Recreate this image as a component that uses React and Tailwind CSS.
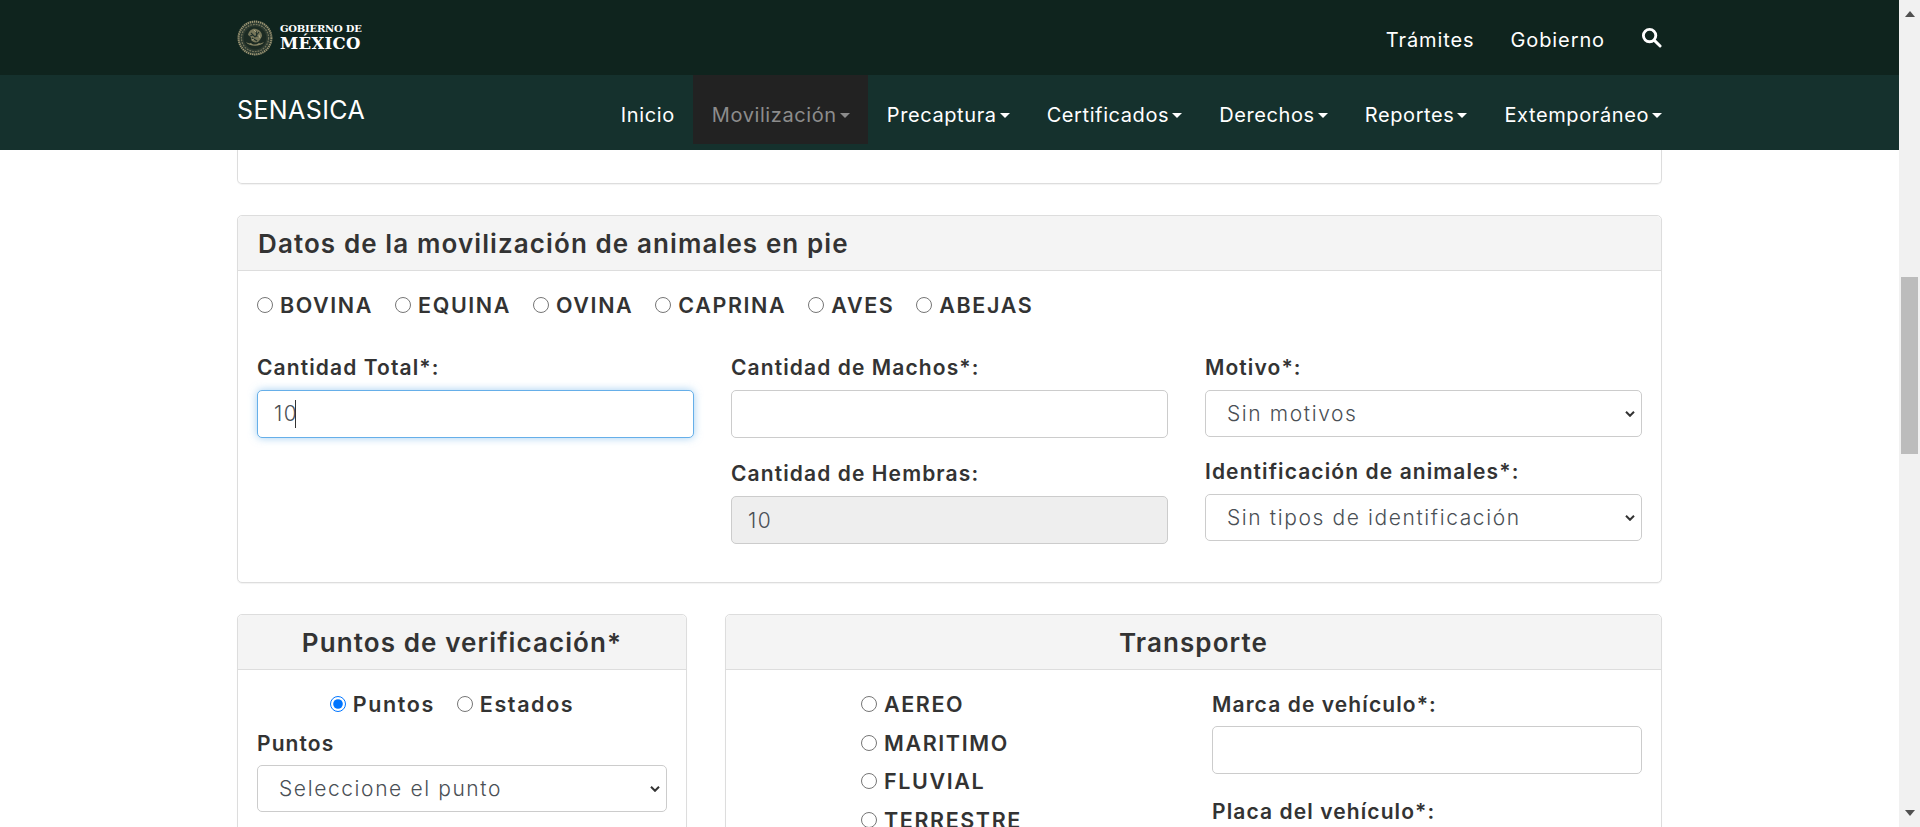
const font = "font-['Inter',sans-serif]"

function Caret() {
  return <span className="ml-[3px] inline-block border-x-[5px] border-t-[5px] border-x-transparent border-t-current align-middle" />
}

function Seal() {
  return (
    <svg viewBox="0 0 36 36" className="h-9 w-9" aria-hidden="true">
      <circle cx="18" cy="18" r="17.6" fill="#2c3a30" />
      <circle cx="18" cy="18" r="16.4" fill="none" stroke="#9c9674" strokeWidth="2" strokeDasharray="1.3 .8" />
      <circle cx="18" cy="18" r="13.6" fill="none" stroke="#77775d" strokeWidth="1.2" strokeDasharray="1.8 1" />
      <circle cx="18" cy="18" r="11.4" fill="#1c2b23" />
      <path d="M9 22c3 5 15 5 18 0-2 1-4 2-5 1-3 2-6 2-8 0-2 1-3 0-5-1z" fill="#8b8867" />
      <path d="M11 15c1-5 5-7 8-6 4 1 6 4 6 7-1 3-3 5-4 6-3 1-5 0-7-2 1-2-1-4-3-5z" fill="#77775a" />
      <path d="M14 13l4 4 4-5M15 18l5 3M19 11l1 6M13 16l3-1" stroke="#20302a" strokeWidth="1.1" fill="none" />
      <path d="M17 10l2 2M22 15l1 3M15 20l2-1" stroke="#b5af8a" strokeWidth=".8" fill="none" />
    </svg>
  )
}

function NavItem({ label, active, caret = true }) {
  return (
    <a className={`flex h-[69px] items-center px-[18.5px] pt-[11px] text-[20px] tracking-[0.6px] ${active ? "bg-[#222222] text-[#8c8c8c]" : "text-white"}`}>
      {label}
      {caret && <Caret />}
    </a>
  )
}

function Label({ children, className = "" }) {
  return <label className={`block text-[21px] leading-[30px] font-semibold tracking-[1.1px] text-[#333333] ${className}`}>{children}</label>
}

function Radio({ label, checked, className = "" }) {
  return (
    <label className={`flex items-center gap-[7px] text-[21.5px] leading-[30px] font-semibold tracking-[1.6px] text-[#333333] ${className}`}>
      <input type="radio" defaultChecked={checked} name={label} className="m-0 h-4 w-4" />
      {label}
    </label>
  )
}

const fieldClass = "block w-full rounded-[5px] border text-[21px] font-light tracking-[1.6px] text-[#4a4f55] outline-none"

function Select({ children }) {
  return (
    <div className="relative">
      <select className={`${fieldClass} h-[47px] appearance-none border-[#cccccc] bg-white pl-[21px] pr-[20px]`}>
        <option>{children}</option>
      </select>
      <svg viewBox="0 0 10 6" className="pointer-events-none absolute top-[21px] right-[7px] h-[6px] w-[10px]" fill="none" stroke="#333333" strokeWidth="2" aria-hidden="true">
        <path d="M1 .8l4 4 4-4" />
      </svg>
    </div>
  )
}

function Input({ value, disabled }) {
  return (
    <input
      defaultValue={value}
      disabled={disabled}
      className={`${fieldClass} h-[48px] border-[#cccccc] px-[16px] ${disabled ? "bg-[#eeeeee]" : "bg-white"}`}
    />
  )
}

function Card({ title, center, className = "", children }) {
  return (
    <section className={`rounded-[5px] border border-[#dddddd] bg-white shadow-[0_1px_1px_rgba(0,0,0,0.05)] ${className}`}>
      <h2 className={`flex h-[55px] items-center rounded-t-[5px] border-b border-[#dddddd] bg-[#f4f4f4] px-[20px] text-[26px] font-semibold tracking-[1.1px] text-[#333333] ${center ? "justify-center" : ""}`}>
        {title}
      </h2>
      {children}
    </section>
  )
}

export default function App() {
  return (
    <div className={`flex h-[827px] overflow-hidden bg-white ${font}`}>
      <div className="min-w-0 flex-1">
        <header className="h-[75px] bg-[#0f241e]">
          <div className="mx-auto flex h-full w-[1425px] items-center justify-between">
            <div className="flex items-center gap-[7px]">
              <Seal />
              <div className="font-['DejaVu_Serif',serif] font-bold text-white">
                <div className="text-[10px] leading-[12px] tracking-[-0.2px]">GOBIERNO DE</div>
                <div className="text-[16.5px] leading-[17px] tracking-[0.3px]">MÉXICO</div>
              </div>
            </div>
            <nav className="flex items-center gap-[36px] text-[20px] tracking-[0.9px] text-white">
              <a className="pt-[4px]">Trámites</a>
              <a className="pt-[4px]">Gobierno</a>
              <svg viewBox="0 0 22 22" className="h-[21px] w-[21px]" fill="none" stroke="white" strokeWidth="3" aria-hidden="true">
                <circle cx="9" cy="9" r="6.5" />
                <path d="M14 14l6 6" strokeLinecap="round" />
              </svg>
            </nav>
          </div>
        </header>

        <div className="h-[75px] bg-[#15312d]">
          <div className="mx-auto flex w-[1425px] items-start justify-between">
            <a className="pt-[17px] text-[25px] tracking-[0.4px] text-white">SENASICA</a>
            <nav className="-mr-[18.5px] flex">
              <NavItem label="Inicio" caret={false} />
              <NavItem label="Movilización" active />
              <NavItem label="Precaptura" />
              <NavItem label="Certificados" />
              <NavItem label="Derechos" />
              <NavItem label="Reportes" />
              <NavItem label="Extemporáneo" />
            </nav>
          </div>
        </div>

        <main className="mx-auto w-[1425px]">
          <div className="h-[34px] rounded-b-[5px] border border-t-0 border-[#dddddd] shadow-[0_1px_1px_rgba(0,0,0,0.05)]" />

          <Card title="Datos de la movilización de animales en pie" className="mt-[31px] h-[368px]">
            <div className="px-[19px]">
              <div className="flex gap-[22px] pt-[19px]">
                <Radio label="BOVINA" />
                <Radio label="EQUINA" />
                <Radio label="OVINA" />
                <Radio label="CAPRINA" />
                <Radio label="AVES" />
                <Radio label="ABEJAS" />
              </div>
              <div className="mt-[33px] grid grid-cols-3 gap-x-[37px]">
                <div>
                  <Label className="mb-[7px]">Cantidad Total*:</Label>
                  <div className={`${fieldClass} flex h-[48px] items-center border-[#66afe9] bg-white px-[16px] shadow-[0_0_8px_rgba(102,175,233,0.6)]`}>
                    10
                    <span className="-ml-[3px] h-[28px] w-px bg-[#333333]" />
                  </div>
                </div>
                <div>
                  <Label className="mb-[7px]">Cantidad de Machos*:</Label>
                  <Input />
                  <Label className="mt-[21px] mb-[7px]">Cantidad de Hembras:</Label>
                  <Input value="10" disabled />
                </div>
                <div>
                  <Label className="mb-[7px]">Motivo*:</Label>
                  <Select>Sin motivos</Select>
                  <Label className="mt-[20px] mb-[7px]">Identificación de animales*:</Label>
                  <Select>Sin tipos de identificación</Select>
                </div>
              </div>
            </div>
          </Card>

          <div className="mt-[31px] flex gap-[38px]">
            <Card title="Puntos de verificación*" center className="h-[300px] w-[450px]">
              <div className="px-[19px]">
                <div className="flex justify-center gap-[22px] pt-[19px] pr-[20px]">
                  <Radio label="Puntos" checked />
                  <Radio label="Estados" />
                </div>
                <Label className="mt-[10px] mb-[6px]">Puntos</Label>
                <Select>Seleccione el punto</Select>
              </div>
            </Card>

            <Card title="Transporte" center className="h-[300px] flex-1">
              <div className="flex pr-[19px]">
                <div className="flex flex-1 flex-col gap-[8.5px] pt-[19px] pl-[135px]">
                  <Radio label="AEREO" />
                  <Radio label="MARITIMO" />
                  <Radio label="FLUVIAL" />
                  <Radio label="TERRESTRE" />
                </div>
                <div className="w-[430px] pt-[20px]">
                  <Label className="mb-[6px]">Marca de vehículo*:</Label>
                  <Input />
                  <Label className="mt-[23px]">Placa del vehículo*:</Label>
                </div>
              </div>
            </Card>
          </div>
        </main>
      </div>

      <div className="flex w-[21px] flex-col items-center bg-[#f1f1f1]">
        <span className="mt-[11px] border-x-[5px] border-b-[6px] border-x-transparent border-b-[#505050]" />
        <div className="mt-[260px] h-[177px] w-[17px] bg-[#bcbcbc]" />
        <span className="mt-auto mb-[11px] border-x-[5px] border-t-[6px] border-x-transparent border-t-[#505050]" />
      </div>
    </div>
  )
}
